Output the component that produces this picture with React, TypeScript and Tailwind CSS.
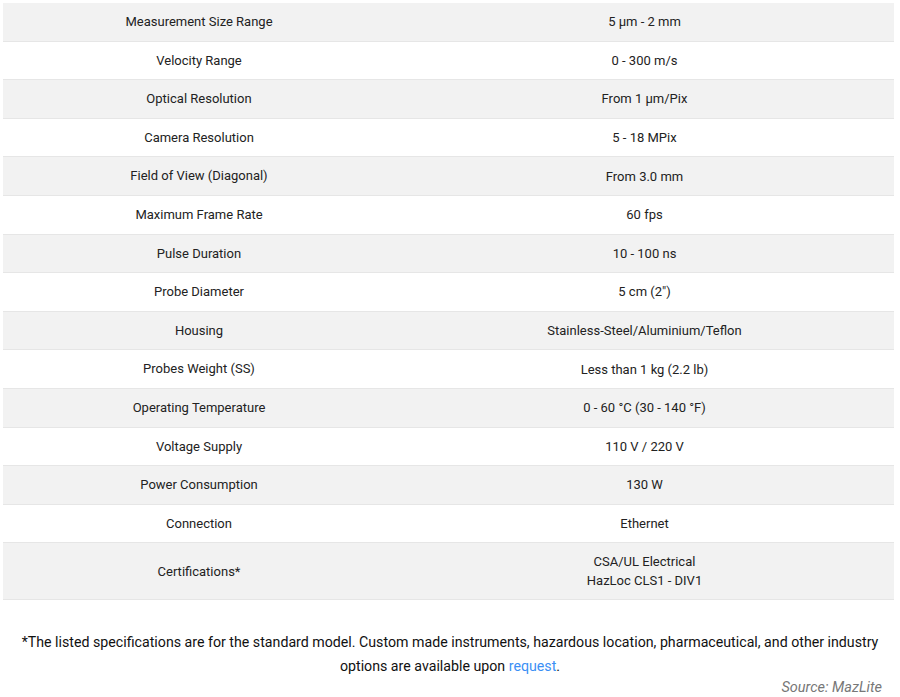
const rows: [string, string[]][] = [
  ['Measurement Size Range', ['5 µm - 2 mm']],
  ['Velocity Range', ['0 - 300 m/s']],
  ['Optical Resolution', ['From 1 µm/Pix']],
  ['Camera Resolution', ['5 - 18 MPix']],
  ['Field of View (Diagonal)', ['From 3.0 mm']],
  ['Maximum Frame Rate', ['60 fps']],
  ['Pulse Duration', ['10 - 100 ns']],
  ['Probe Diameter', ['5 cm (2")']],
  ['Housing', ['Stainless-Steel/Aluminium/Teflon']],
  ['Probes Weight (SS)', ['Less than 1 kg (2.2 lb)']],
  ['Operating Temperature', ['0 - 60 °C (30 - 140 °F)']],
  ['Voltage Supply', ['110 V / 220 V']],
  ['Power Consumption', ['130 W']],
  ['Connection', ['Ethernet']],
  ['Certifications*', ['CSA/UL Electrical', 'HazLoc CLS1 - DIV1']],
];

export default function App() {
  return (
    <div className="w-[900px] h-[697px] bg-white text-[#222] pt-[3px]" style={{ fontFamily: 'Roboto, sans-serif' }}>
      <div className="mx-[3px] w-[891px] text-[13px]">
        {rows.map(([k, v], i) => (
          <div
            key={k}
            className={`grid grid-cols-[392px_1fr] items-center border-b border-[#e6e6e6] ${i % 2 === 0 ? 'bg-[#f2f2f2]' : 'bg-white'} ${v.length > 1 ? 'h-[57px]' : 'h-[38.6px]'}`}
          >
            <div className="text-center">{k}</div>
            <div className="text-center leading-[19px]">
              {v.map((l) => (
                <div key={l}>{l}</div>
              ))}
            </div>
          </div>
        ))}
      </div>
      <p className="mt-[30px] text-center text-[14.2px] leading-[24px] text-[#111]">
        *The listed specifications are for the standard model. Custom made instruments, hazardous location, pharmaceutical, and other industry
        options are available upon <span className="text-[#3b8ff5]">request</span>.
      </p>
      <div className="text-right pr-[18px] italic text-[14.5px] text-[#777] leading-[18px] mt-[1px]">Source: MazLite</div>
    </div>
  );
}
